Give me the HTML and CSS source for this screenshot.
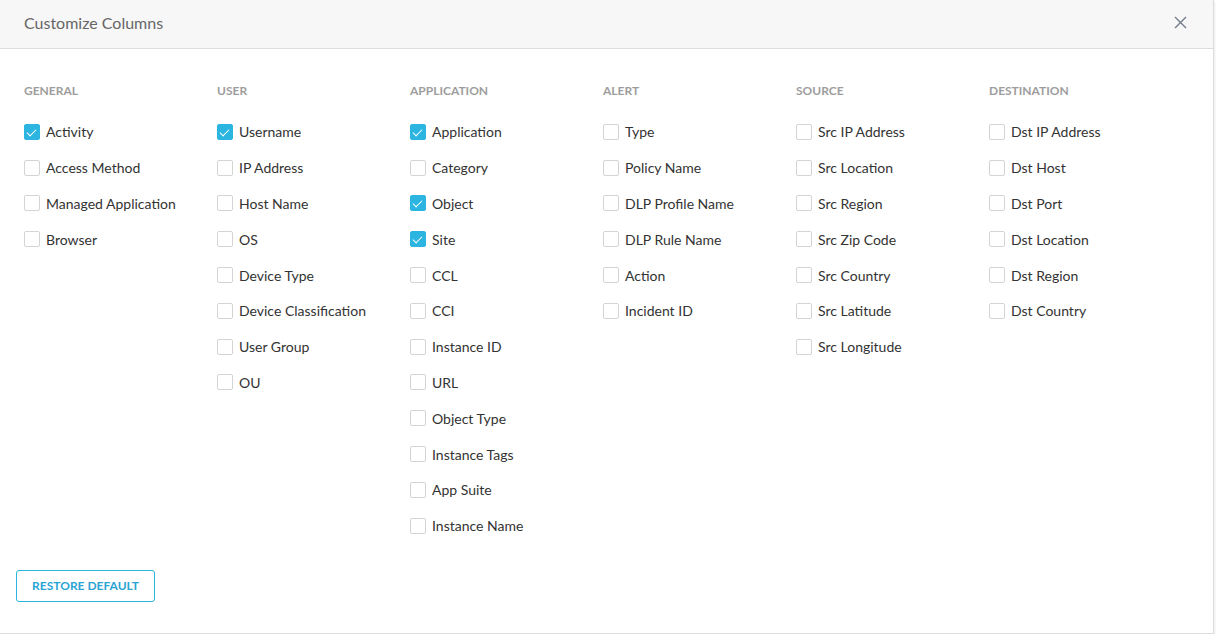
FILE: index.html
```html
<!DOCTYPE html>
<html>
<head>
<meta charset="utf-8">
<link rel="stylesheet" href="styles.css">
</head>
<body>
<div class="dialog">
  <div class="dialog-header">
    <span class="title">Customize Columns</span>
    <button class="close" aria-label="Close">
      <svg width="13" height="13" viewBox="0 0 13 13"><path d="M1 1L12 12M12 1L1 12" stroke="#6f7b88" stroke-width="1.4" fill="none"/></svg>
    </button>
  </div>
  <div class="dialog-body">
    <div class="col">
      <div class="col-title">GENERAL</div>
      <label class="row"><span class="cb on"></span>Activity</label>
      <label class="row"><span class="cb"></span>Access Method</label>
      <label class="row"><span class="cb"></span>Managed Application</label>
      <label class="row"><span class="cb"></span>Browser</label>
    </div>
    <div class="col">
      <div class="col-title">USER</div>
      <label class="row"><span class="cb on"></span>Username</label>
      <label class="row"><span class="cb"></span>IP Address</label>
      <label class="row"><span class="cb"></span>Host Name</label>
      <label class="row"><span class="cb"></span>OS</label>
      <label class="row"><span class="cb"></span>Device Type</label>
      <label class="row"><span class="cb"></span>Device Classification</label>
      <label class="row"><span class="cb"></span>User Group</label>
      <label class="row"><span class="cb"></span>OU</label>
    </div>
    <div class="col">
      <div class="col-title">APPLICATION</div>
      <label class="row"><span class="cb on"></span>Application</label>
      <label class="row"><span class="cb"></span>Category</label>
      <label class="row"><span class="cb on"></span>Object</label>
      <label class="row"><span class="cb on"></span>Site</label>
      <label class="row"><span class="cb"></span>CCL</label>
      <label class="row"><span class="cb"></span>CCI</label>
      <label class="row"><span class="cb"></span>Instance ID</label>
      <label class="row"><span class="cb"></span>URL</label>
      <label class="row"><span class="cb"></span>Object Type</label>
      <label class="row"><span class="cb"></span>Instance Tags</label>
      <label class="row"><span class="cb"></span>App Suite</label>
      <label class="row"><span class="cb"></span>Instance Name</label>
    </div>
    <div class="col">
      <div class="col-title">ALERT</div>
      <label class="row"><span class="cb"></span>Type</label>
      <label class="row"><span class="cb"></span>Policy Name</label>
      <label class="row"><span class="cb"></span>DLP Profile Name</label>
      <label class="row"><span class="cb"></span>DLP Rule Name</label>
      <label class="row"><span class="cb"></span>Action</label>
      <label class="row"><span class="cb"></span>Incident ID</label>
    </div>
    <div class="col">
      <div class="col-title">SOURCE</div>
      <label class="row"><span class="cb"></span>Src IP Address</label>
      <label class="row"><span class="cb"></span>Src Location</label>
      <label class="row"><span class="cb"></span>Src Region</label>
      <label class="row"><span class="cb"></span>Src Zip Code</label>
      <label class="row"><span class="cb"></span>Src Country</label>
      <label class="row"><span class="cb"></span>Src Latitude</label>
      <label class="row"><span class="cb"></span>Src Longitude</label>
    </div>
    <div class="col">
      <div class="col-title">DESTINATION</div>
      <label class="row"><span class="cb"></span>Dst IP Address</label>
      <label class="row"><span class="cb"></span>Dst Host</label>
      <label class="row"><span class="cb"></span>Dst Port</label>
      <label class="row"><span class="cb"></span>Dst Location</label>
      <label class="row"><span class="cb"></span>Dst Region</label>
      <label class="row"><span class="cb"></span>Dst Country</label>
    </div>
  </div>
  <div class="dialog-footer">
    <button class="restore">RESTORE DEFAULT</button>
  </div>
</div>
</body>
</html>
```

FILE: styles.css
```css
html, body {
  margin: 0;
  padding: 0;
  background: #ffffff;
}
body {
  font-family: Lato, "Open Sans", sans-serif;
  color: #333;
}
.dialog {
  width: 1214px;
  height: 634px;
  box-sizing: border-box;
  border-right: 1px solid #dcdcdc;
  border-bottom: 1px solid #dcdcdc;
  box-shadow: 1px 2px 2px rgba(0,0,0,0.08);
  background: #fff;
  display: flex;
  flex-direction: column;
}
.dialog-header {
  height: 49px;
  box-sizing: border-box;
  background: #f7f7f7;
  border-bottom: 1px solid #dedede;
  display: flex;
  align-items: center;
  justify-content: space-between;
  padding: 0 26px 0 24px;
}
.title {
  font-size: 16px;
  color: #666;
  margin-top: -3px;
}
.close {
  border: 0;
  background: none;
  padding: 0;
  width: 13px;
  height: 13px;
  margin-top: -4px;
  display: flex;
}
.dialog-body {
  display: flex;
  padding: 35px 24px 0 24px;
}
.col {
  width: 193px;
  display: flex;
  flex-direction: column;
}
.col-title {
  font-size: 12px;
  font-weight: 700;
  color: #9d9d9d;
  line-height: 14px;
  height: 14px;
  margin-bottom: 16px;
}
.row {
  display: flex;
  align-items: center;
  height: 35.8px;
  font-size: 14px;
  color: #333;
}
.cb {
  width: 16px;
  height: 16px;
  box-sizing: border-box;
  border: 1px solid #d4d4d4;
  border-radius: 2px;
  margin-right: 6px;
  flex: none;
  position: relative;
  background: #fff;
}
.cb.on {
  background: #2bb5e0;
  border-color: #2bb5e0;
}
.cb.on::after {
  content: "";
  position: absolute;
  left: 4px;
  top: 2px;
  width: 4px;
  height: 8px;
  border-right: 1.5px solid #fff;
  border-bottom: 1.5px solid #fff;
  transform: rotate(45deg);
}
.dialog-footer {
  padding: 26px 16px 0 16px;
}
.restore {
  height: 32px;
  width: 139px;
  box-sizing: border-box;
  border: 1px solid #2bb5e0;
  border-radius: 3px;
  background: #fff;
  color: #2aa4d4;
  font-family: Lato, "Open Sans", sans-serif;
  font-size: 12px;
  font-weight: 700;
  padding: 0;
}
```
